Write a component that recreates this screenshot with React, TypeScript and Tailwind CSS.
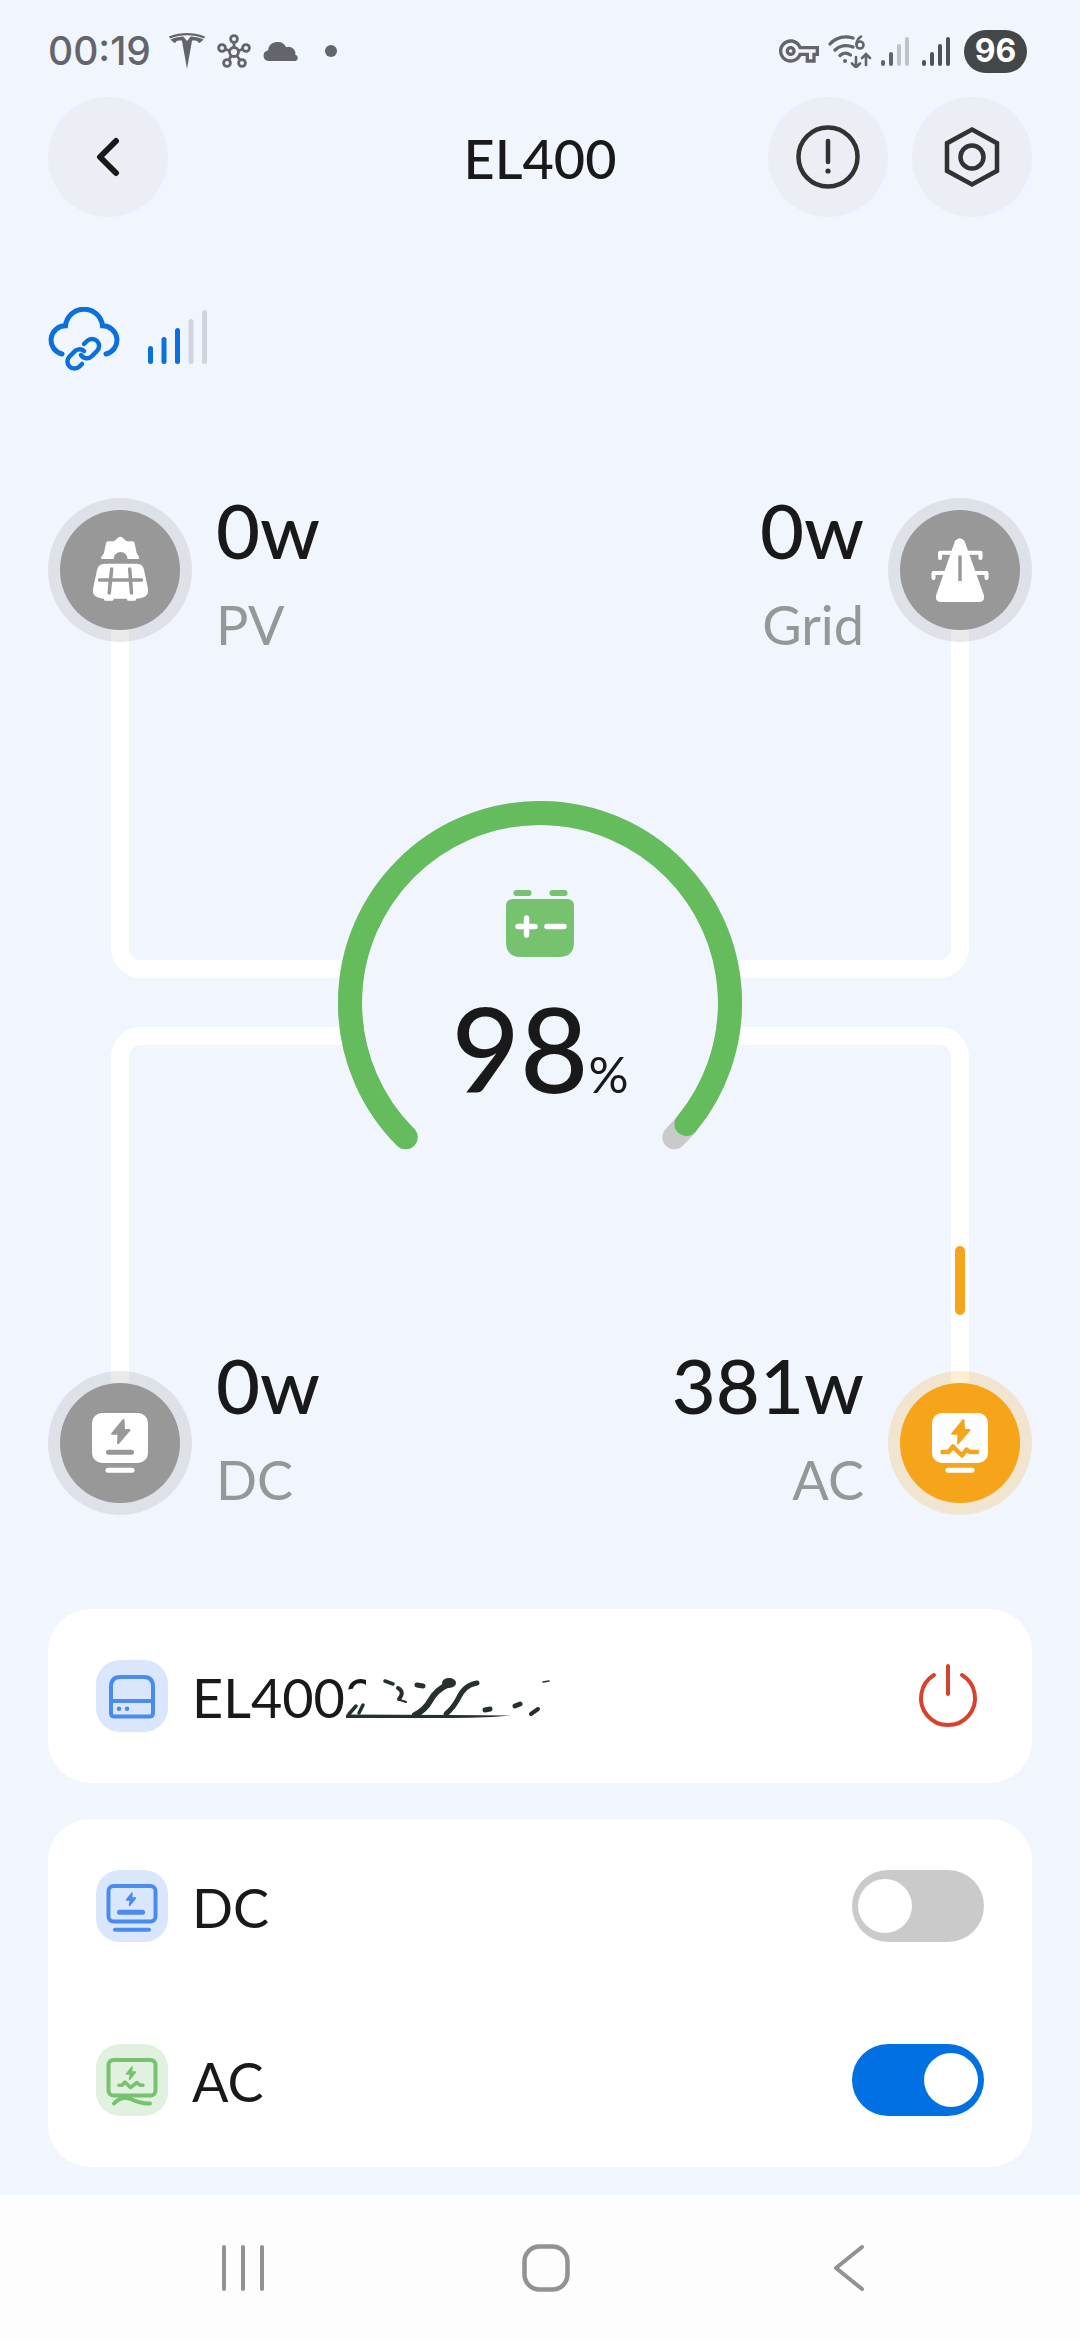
import type { ReactNode } from "react";
import { useState } from "react";
import { SiTesla } from "react-icons/si";
import { MdOutlineVpnKey } from "react-icons/md";

function Bars({ color, faded }: { color: string; faded: number }) {
  const heights = [6, 14, 22, 29];
  return (
    <svg viewBox="0 0 28 30" className="h-[30px] w-[28px]" fill={color}>
      {heights.map((h, i) => (
        <rect key={h} x={i * 8} y={30 - h} width="4" height={h} rx="2" opacity={i >= 4 - faded ? 0.35 : 1} />
      ))}
    </svg>
  );
}

function StatusBar() {
  return (
    <div className="flex h-[97px] items-center justify-between pt-[5px] pr-[53px] pl-[48px] text-[#63656a]">
      <div className="flex items-center">
        <span className="font-['Inter',sans-serif] text-[39px] font-medium">00:19</span>
        <SiTesla className="ml-[18px] size-[36px]" />
        <svg viewBox="0 0 34 34" className="ml-[12px] size-[34px]" fill="none" stroke="currentColor" strokeWidth="2.8">
          <circle cx="17" cy="18" r="4.5" />
          <circle cx="17" cy="5" r="3.4" />
          <circle cx="5" cy="14" r="3.4" />
          <circle cx="29" cy="14" r="3.4" />
          <circle cx="10" cy="29" r="3.4" />
          <circle cx="25" cy="29" r="3.4" />
          <path d="M17 8v5M8 15l5 2M26 15l-5 2M12 26l2-4M23 26l-3-4" />
        </svg>
        <svg viewBox="0 0 36 22" className="ml-[12px] h-[22px] w-[36px]" fill="currentColor">
          <path d="M5.500 21a5.300 5.300 0 0 1-.6-10.500 9.800 9.800 0 0 1 18.400-3.300 6.800 6.800 0 0 1 9 7.600A3.200 3.200 0 0 1 32.500 21z" />
        </svg>
        <span className="ml-[26px] size-[12px] rounded-full bg-current" />
      </div>
      <div className="flex items-center">
        <MdOutlineVpnKey className="size-[40px]" />
        <svg viewBox="0 0 44 34" className="ml-[9px] h-[34px] w-[44px]" fill="none" stroke="currentColor" strokeWidth="3.200" strokeLinecap="round">
          <path d="M2 10C8 3.500 16 1.500 25 4M7 16c4-4 11-6 18-3M12 21.500c3-3 7-3 10.500-.5" />
          <circle cx="17" cy="27" r="2" fill="currentColor" stroke="none" />
          <path strokeWidth="2.600" d="M33 2.500c-3 2-4.500 4.500-4.500 8M28 23v10M24 29.500l4 4 4-4M38 31V20.500M34 24l4-4 4 4" />
          <circle cx="32" cy="11" r="3.500" strokeWidth="2.600" />
        </svg>
        <div className="ml-[9px] flex gap-[13px]">
          <Bars color="#63656a" faded={2} />
          <Bars color="#505257" faded={0} />
        </div>
        <span className="ml-[14px] flex h-[43px] w-[63px] items-center justify-center rounded-full bg-[#444748] font-['Inter',sans-serif] text-[32px] font-bold text-white">
          96
        </span>
      </div>
    </div>
  );
}

function RoundButton({ label, children }: { label: string; children: ReactNode }) {
  return (
    <button aria-label={label} className="flex size-[120px] items-center justify-center rounded-full bg-[#ebeef5]">
      {children}
    </button>
  );
}

function Header() {
  return (
    <header className="grid grid-cols-[1fr_auto_1fr] items-center px-12">
      <RoundButton label="Back">
        <svg viewBox="0 0 24 40" className="h-[40px] w-[24px]" fill="none" stroke="#181918" strokeWidth="6" strokeLinecap="round" strokeLinejoin="round">
          <path d="M20 4 4 20l16 16" />
        </svg>
      </RoundButton>
      <h1 className="pt-1 text-[54px] leading-[60px] font-medium">EL400</h1>
      <div className="flex justify-end gap-6">
        <RoundButton label="Alerts">
          <svg viewBox="0 0 64 64" className="size-[64px]" fill="none" stroke="#303332" strokeWidth="4.500" strokeLinecap="round">
            <circle cx="32" cy="32" r="29.500" />
            <path d="M32 16v21" />
            <circle cx="32" cy="46" r="2.600" fill="#303332" stroke="none" />
          </svg>
        </RoundButton>
        <RoundButton label="Settings">
          <svg viewBox="0 0 64 64" className="size-[64px]" fill="none" stroke="#303332" strokeWidth="4.500">
            <path d="M32 4.500 57 18.200v27.600L32 59.500 7 45.800V18.200z" />
            <circle cx="32" cy="32" r="11.500" />
          </svg>
        </RoundButton>
      </div>
    </header>
  );
}

function Connection() {
  return (
    <div className="mt-[90px] flex h-[66px] items-start px-12">
      <svg viewBox="0 0 72 66" className="h-[66px] w-[72px]" fill="none" stroke="#0a70dd" strokeWidth="5" strokeLinecap="round">
        <path d="M14 47A14.300 14.300 0 0 1 17.500 18.800A18.600 18.600 0 0 1 54.500 18.800A14.300 14.300 0 0 1 58 47" />
        <path strokeWidth="4.500" d="M36 37l3-3a7 7 0 0 1 10 10l-5 5a7 7 0 0 1-11-1M36 44a7 7 0 0 0-10 1l-4.500 4.500a7 7 0 0 0 10 10l2.500-2.500" />
      </svg>
      <svg viewBox="0 0 60 54" className="mt-[3px] ml-[28px] h-[54px] w-[60px]">
        {[18, 27, 36, 45, 54].map((h, i) => (
          <rect key={h} x={i * 13.5} y={54 - h} width="5" height={h} rx="2.5" fill={i < 3 ? "#0a70dd" : "#d1d4dc"} />
        ))}
      </svg>
    </div>
  );
}

const nodeIcons = {
  pv: (
    <>
      <path fill="#fff" d="M42 49q-2-1 0-3l2-3 2-10q.4-1.700 2-1.700h6l4.500-4q1.800-1.200 3.600 0l4.500 4h6q1.600 0 2 1.700l2 10 2.500 4q.6 2-1 2h-10.500a7 7 0 0 0-14 0z" />
      <path fill="#fff" d="M45 53.700h31.500q6.500 0 7.500 6l4 19q.8 6.600-4.500 8.600-3.500 1.400-7.500 1.400v1q0 1-1.500 1H68.500q-1.500 0-1.500-1v-1H53.500v1q0 1-1.500 1H45.500q-1.500 0-1.500-1v-1q-3.500 0-6.500-1.400Q32 85 33 79l4-19q1.200-6.300 8-6.300z" />
      <path stroke="#989898" strokeWidth="3.500" strokeLinecap="round" d="M39.500 70h42M51.700 59l-2.500 24M69.700 59l1.800 24" />
    </>
  ),
  grid: (
    <>
      <path fill="#fff" d="M55 31q4.700-5.500 9.500 0L84 85.500q1 6.500-4.500 6.500h-39q-5.500 0-4.500-6.500z" />
      <path stroke="#fff" strokeWidth="4" fill="none" strokeLinecap="round" strokeLinejoin="round" d="M40 48v-5.300h40.500V48M33.500 68v-5h53v5" />
      <path stroke="#989898" strokeWidth="3.500" d="M60 45.500V71" />
    </>
  ),
  dc: (
    <>
      <rect x="32" y="30" width="56" height="50" rx="10" fill="#fff" />
      <path fill="#989898" stroke="#989898" strokeWidth="2" strokeLinejoin="round" d="M63.500 37 52 50.800h6.500l-.5 9.500L69.500 47H64z" />
      <path stroke="#989898" strokeWidth="5" strokeLinecap="round" d="M48.500 69.300h23" />
      <path stroke="#fff" strokeWidth="5" strokeLinecap="round" d="M48 87.300h24" />
    </>
  ),
  ac: (
    <>
      <rect x="32" y="30" width="56" height="50" rx="10" fill="#fff" />
      <path fill="#f6a51b" stroke="#f6a51b" strokeWidth="2" strokeLinejoin="round" d="M63.500 37 52 50.800h6.500l-.5 9.500L69.500 47H64z" />
      <path stroke="#f6a51b" strokeWidth="4.500" fill="none" strokeLinecap="round" strokeLinejoin="round" d="M42.500 69h6l4.500-5.500 9 9 4.500-6L70 69h7" />
      <path stroke="#fff" strokeWidth="5" strokeLinecap="round" d="M48 87.300h24" />
    </>
  ),
};

type NodeProps = { icon: keyof typeof nodeIcons; value: string; label: string; right?: boolean; low?: boolean; active?: boolean };

function EnergyNode({ icon, value, label, right, low, active }: NodeProps) {
  return (
    <div className={`relative flex items-center gap-6 ${right ? "flex-row-reverse text-right" : ""}`}>
      <div className={`flex size-[144px] items-center justify-center rounded-full ${active ? "bg-[#f6a51b]/20" : "bg-[#989898]/20"}`}>
        <div className={`size-[120px] rounded-full ${active ? "bg-[#f6a51b]" : "bg-[#989898]"}`}>
          <svg viewBox="0 0 120 120" className="size-[120px]">{nodeIcons[icon]}</svg>
        </div>
      </div>
      <div className={`flex flex-col gap-[30px] ${low ? "mb-8" : "mt-1"}`}>
        <span className="text-[76px] leading-[76px] font-medium">{value}</span>
        <span className="text-[54px] leading-[54px] text-[#949897]">{label}</span>
      </div>
    </div>
  );
}

function Gauge({ percent }: { percent: number }) {
  const arc = "M67.650 336.350A190 190 0 1 1 336.350 336.350";
  return (
    <div className="relative mx-auto mt-[149px] mb-[142px] size-[404px] rounded-full bg-[#f1f5fd]">
      <svg viewBox="0 0 404 404" className="size-full" fill="none" strokeWidth="24" strokeLinecap="round">
        <path d={arc} stroke="#cacaca" />
        <path d={arc} stroke="#65bc5c" pathLength="100" strokeDasharray={`${percent} 200`} />
      </svg>
      <div className="absolute inset-x-0 top-[88px] flex flex-col items-center">
        <svg viewBox="0 0 70 70" className="size-[70px]">
          <g fill="#77c26e">
            <rect x="8.500" y="1" width="18" height="6" rx="3" />
            <rect x="44.500" y="1" width="18" height="6" rx="3" />
            <path d="M8 10h54q7 0 7 7v36q0 15-15 15H16Q1 68 1 53V17q0-7 7-7z" />
          </g>
          <path stroke="#fff" strokeWidth="5.500" strokeLinecap="round" d="M13 37.500h17M21.500 29v17M42 37.500h17" />
        </svg>
        <div className="mt-[30px] flex items-baseline">
          <span className="text-[118px] leading-[118px] font-medium">{percent}</span>
          <span className="text-[50px] leading-[50px]">%</span>
        </div>
      </div>
    </div>
  );
}

function EnergyFlow() {
  return (
    <section className="relative mx-12 mt-[115px]">
      <div className="absolute top-[82px] right-[63px] left-[63px] h-[408px] rounded-b-[30px] border-x-[18px] border-b-[18px] border-white" />
      <div className="absolute top-[539px] right-[63px] bottom-[96px] left-[63px] rounded-t-[30px] border-x-[18px] border-t-[18px] border-white" />
      <div className="absolute right-[67px] bottom-[224px] h-[69px] w-[10px] rounded-full bg-[#f6a51b]" />
      <div className="flex justify-between">
        <EnergyNode icon="pv" value="0w" label="PV" />
        <EnergyNode icon="grid" value="0w" label="Grid" right />
      </div>
      <Gauge percent={98} />
      <div className="flex justify-between">
        <EnergyNode icon="dc" value="0w" label="DC" low />
        <EnergyNode icon="ac" value="381w" label="AC" right low active />
      </div>
    </section>
  );
}

function Tile({ green, children }: { green?: boolean; children: ReactNode }) {
  return (
    <svg viewBox="0 0 72 72" fill="none" strokeWidth="4" strokeLinecap="round" strokeLinejoin="round"
      className={`size-[72px] rounded-[24px] ${green ? "bg-[#e0f1df] stroke-[#77c26e] text-[#77c26e]" : "bg-[#d9e6fc] stroke-[#4a8bef] text-[#4a8bef]"}`}>
      {children}
    </svg>
  );
}

function Smudge() {
  return (
    <svg viewBox="0 0 206 48" className="mt-2 -ml-[30px] h-[48px] w-[206px]" fill="none" stroke="#26302f" strokeLinecap="round">
      <path d="M0 14 20 10V0h16v46H18l-3-7H0z" fill="#fff" stroke="none" />
      <path strokeWidth="3.500" d="M10 30 3 38M17 29l-4 8M39 5l8 3" />
      <path strokeWidth="4" d="M52 12q7 4 1 11" />
      <path strokeWidth="2" d="M54 24l6 2" />
      <path fill="#26302f" stroke="none" d="M0 38.500 105 39l60 .5q-20 2.500-60 2.500H0z" />
      <path strokeWidth="6" d="M101 9Q90 14 84 25q-5 9-15 14" />
      <ellipse cx="103" cy="7" rx="7" ry="5" fill="#26302f" stroke="none" />
      <path strokeWidth="5" d="M131 7q-13 2-19 16-5 9-12 15" />
      <path strokeWidth="5" d="M71 9l6 1M139 34l5-1M169 30l5-2" />
      <path strokeWidth="4" d="M192 33l-7 5" />
      <path strokeWidth="1.500" d="M197 6l6-1" />
    </svg>
  );
}

const tileBolt = "M36 23 30.500 30h4l-1 5.500 6-7.500h-4z";

function SwitchRow({ id, label, initial, children }: { id: string; label: string; initial: boolean; children: ReactNode }) {
  const [on, setOn] = useState(initial);
  return (
    <div className="flex h-[174px] items-center">
      {children}
      <label htmlFor={id} className="ml-6 flex-1 pt-1 text-[54px] leading-[60px]">{label}</label>
      <input
        id={id}
        type="checkbox"
        role="switch"
        checked={on}
        onChange={() => setOn(!on)}
        className="flex h-[72px] w-[132px] appearance-none items-center rounded-full bg-[#cacaca] px-[6px] before:size-[54px] before:rounded-full before:bg-white checked:justify-end checked:bg-[#0070e3]"
      />
    </div>
  );
}

function NavBar() {
  return (
    <nav className="mt-auto grid h-[145px] grid-cols-3 items-center bg-[#fdfdfd] pr-[80px] pl-[92px]">
      <button aria-label="Recent apps" className="flex justify-center">
        <svg viewBox="0 0 48 48" className="size-[48px]" stroke="#929292" strokeWidth="4" strokeLinecap="round">
          <path d="M5 3v42M24 3v42M43 3v42" />
        </svg>
      </button>
      <button aria-label="Home" className="flex justify-center">
        <svg viewBox="0 0 48 48" className="size-[48px]" fill="none" stroke="#929292" strokeWidth="4.500">
          <rect x="2.500" y="2.500" width="43" height="43" rx="15" />
        </svg>
      </button>
      <button aria-label="Go back" className="flex justify-center">
        <svg viewBox="0 0 48 48" className="size-[48px]" fill="none" stroke="#929292" strokeWidth="4" strokeLinecap="round" strokeLinejoin="round">
          <path d="M37 3 11 24l26 21" />
        </svg>
      </button>
    </nav>
  );
}

export default function App() {
  return (
    <div className="flex min-h-screen flex-col bg-[#f1f5fd] font-['Lato',sans-serif] text-[#181918]">
      <StatusBar />
      <Header />
      <Connection />
      <EnergyFlow />
      <main className="mx-12 mt-[70px] mb-7 flex flex-col gap-9">
        <div className="flex h-[174px] items-center rounded-[42px] bg-white px-12">
          <Tile>
            <path d="M24 17h24q9 0 9 10v26q0 3.500-3.500 3.500h-35Q15 56.500 15 53V27q0-10 9-10zM15 41h42" />
            <circle cx="23" cy="48.700" r="2.300" fill="currentColor" stroke="none" />
            <circle cx="31" cy="48.700" r="2.300" fill="currentColor" stroke="none" />
          </Tile>
          <span className="ml-6 pt-1 text-[54px] leading-[60px]">EL4002</span>
          <Smudge />
          <button aria-label="Power" className="ml-auto">
            <svg viewBox="0 0 72 72" className="size-[72px]" fill="none" stroke="#d8422c" strokeWidth="4" strokeLinecap="round">
              <path d="M36 6v28M22 15a27 27 0 1 0 28 0" />
            </svg>
          </button>
        </div>
        <div className="rounded-[42px] bg-white px-12">
          <SwitchRow id="dc" label="DC" initial={false}>
            <Tile>
              <rect x="12.500" y="16" width="47" height="35.500" rx="5" />
              <path d={tileBolt} fill="currentColor" strokeWidth="1.500" />
              <path d="M23.500 42.300h23" strokeWidth="5" />
              <path d="M19 59.700h34" />
            </Tile>
          </SwitchRow>
          <SwitchRow id="ac" label="AC" initial>
            <Tile green>
              <rect x="12.500" y="16" width="47" height="35.500" rx="5" />
              <path d={tileBolt} fill="currentColor" strokeWidth="1.500" />
              <path d="M23 41.300h3l3-3.300 5.500 5.500 6.500-5 3 2.800h3" strokeWidth="3.500" />
              <path d="M18 59.500q7-8 17-4.500 10 5 19 4.500" />
            </Tile>
          </SwitchRow>
        </div>
      </main>
      <NavBar />
    </div>
  );
}
